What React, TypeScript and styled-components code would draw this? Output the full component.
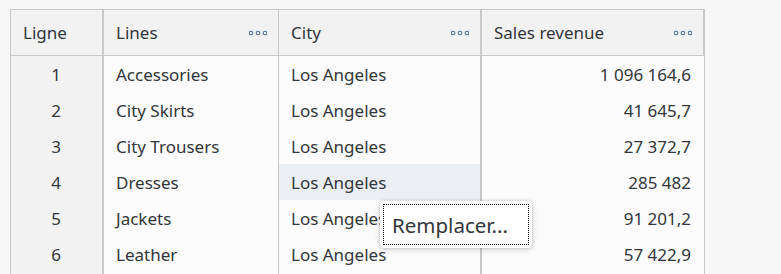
import React from "react";
import styled, { createGlobalStyle } from "styled-components";

const Global = createGlobalStyle`
  html, body { margin: 0; padding: 0; background: #f7f7f7; overflow: hidden; }
  body { font-family: "Noto Sans", "Open Sans", Arial, sans-serif; color: #32363a; }
`;

const Page = styled.div`
  position: relative;
  width: 781px;
  height: 274px;
  overflow: hidden;
  padding: 9px 0 0 10px;
  box-sizing: border-box;
`;

const Grid = styled.div`
  display: grid;
  grid-template-columns: 93px 175px 203px 222px;
  width: max-content;
  border: 1px solid #c8c8c8;
  background: #c8c8c8;
`;

const HeadCell = styled.div<{ $thick?: boolean }>`
  height: 45px;
  margin-bottom: 1px;
  margin-right: ${(p) => (p.$thick ? "2px" : "1px")};
  background: #f2f2f2;
  display: flex;
  align-items: center;
  justify-content: space-between;
  padding: 0 11px 0 12px;
  font-size: 17px;
  box-sizing: border-box;
  &:last-child { margin-right: 0; }
`;

const Cell = styled.div<{ $thick?: boolean; $kind?: "index" | "text" | "num"; $hover?: boolean }>`
  height: 36px;
  margin-right: ${(p) => (p.$thick ? "2px" : "1px")};
  background: ${(p) => (p.$kind === "index" ? "#f2f2f2" : p.$hover ? "#ebeef3" : "#fbfbfb")};
  display: flex;
  align-items: center;
  justify-content: ${(p) => (p.$kind === "index" ? "center" : p.$kind === "num" ? "flex-end" : "flex-start")};
  padding: 0 13px 0 12px;
  font-size: 17px;
  box-sizing: border-box;
  white-space: nowrap;
  &:nth-child(4n) { margin-right: 0; }
`;

const Menu = styled.div`
  position: absolute;
  left: 380px;
  top: 201px;
  width: 152px;
  height: 47px;
  background: #fff;
  border-radius: 4px;
  box-shadow: 0 0 3px rgba(0, 0, 0, 0.25), 0 2px 6px rgba(0, 0, 0, 0.12);
  padding: 3px;
  box-sizing: border-box;
`;

const MenuItem = styled.div`
  height: 100%;
  border: 1px dotted #000;
  display: flex;
  align-items: center;
  padding-left: 8px;
  font-size: 20.5px;
  color: #32363a;
  box-sizing: border-box;
`;

const More = () => (
  <svg width="18" height="6" viewBox="0 0 18 6">
    {[2, 9, 16].map((x) => (
      <circle key={x} cx={x} cy="3" r="1.8" fill="none" stroke="#4f6f8f" strokeWidth="1.1" />
    ))}
  </svg>
);

const rows: [string, string, string, string][] = [
  ["1", "Accessories", "Los Angeles", "1 096 164,6"],
  ["2", "City Skirts", "Los Angeles", "41 645,7"],
  ["3", "City Trousers", "Los Angeles", "27 372,7"],
  ["4", "Dresses", "Los Angeles", "285 482"],
  ["5", "Jackets", "Los Angeles", "91 201,2"],
  ["6", "Leather", "Los Angeles", "57 422,9"],
  ["", "", "", ""],
];

export default function App() {
  return (
    <Page>
      <Global />
      <Grid>
        <HeadCell $thick>Ligne</HeadCell>
        <HeadCell>
          Lines <More />
        </HeadCell>
        <HeadCell $thick>
          City <More />
        </HeadCell>
        <HeadCell>
          Sales revenue <More />
        </HeadCell>
        {rows.map((r, i) => (
          <React.Fragment key={i}>
            <Cell $kind="index" $thick>{r[0]}</Cell>
            <Cell $kind="text">{r[1]}</Cell>
            <Cell $kind="text" $thick $hover={i === 3}>{r[2]}</Cell>
            <Cell $kind="num">{r[3]}</Cell>
          </React.Fragment>
        ))}
      </Grid>
      <Menu>
        <MenuItem>Remplacer...</MenuItem>
      </Menu>
    </Page>
  );
}
